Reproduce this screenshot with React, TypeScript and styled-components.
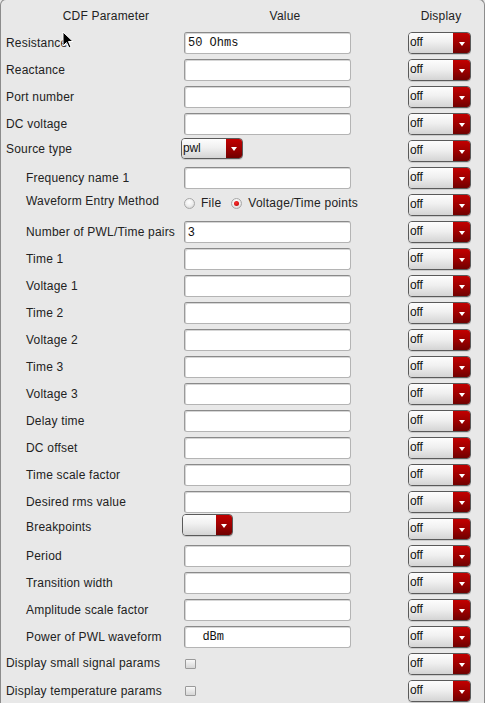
import React from "react";
import styled, { createGlobalStyle } from "styled-components";

const Global = createGlobalStyle`
  html, body { margin: 0; padding: 0; background: #e8e8e8; }
  body { font-family: "Liberation Sans", Arial, sans-serif; font-size: 12px; color: #222; overflow: hidden; }
`;

const Panel = styled.div`
  position: relative;
  width: 485px;
  height: 712px;
  box-sizing: border-box;
  margin-top: -1px;
  border: 1px solid #8c8c8c;
  border-bottom: none;
  border-radius: 6px 6px 0 0;
  background: #e8e8e8;
`;

const Header = styled.div`
  display: grid;
  grid-template-columns: 200px 202px 66px;
  height: 30px;
  align-items: center;
  padding-left: 5px;
  box-sizing: border-box;
  padding-top: 1px;
`;

const HeadCell = styled.div<{ $pad?: number }>`
  text-align: center;
  padding-right: ${(p) => p.$pad ?? 0}px;
  color: #222;
  letter-spacing: 0.2px;
`;

const Row = styled.div`
  display: flex;
  align-items: flex-start;
  height: 27px;
  padding-top: 2px;
  padding-left: 5px;
  box-sizing: border-box;
`;

const Label = styled.div<{ $indent?: boolean; $lift?: number }>`
  width: 178px;
  flex: none;
  box-sizing: border-box;
  padding-left: ${(p) => (p.$indent ? 20 : 0)}px;
  line-height: 22px;
  height: 22px;
  margin-top: ${(p) => -(p.$lift ?? 0)}px;
  white-space: nowrap;
  letter-spacing: 0.2px;
  color: #222;
`;

const ValueCell = styled.div<{ $lift?: number }>`
  width: 224px;
  flex: none;
  display: flex;
  align-items: center;
  height: 22px;
  margin-top: ${(p) => -(p.$lift ?? 0)}px;
`;

const DisplayCell = styled.div`
  width: 63px;
  flex: none;
`;

const TextField = styled.div<{ $mono?: boolean }>`
  width: 167px;
  height: 22px;
  box-sizing: border-box;
  background: #fff;
  border: 1px solid #b4b4b4;
  border-top-color: #8a8a8a;
  border-left-color: #9a9a9a;
  border-radius: 3px;
  box-shadow: inset 1px 1px 0 #d6d6d6;
  padding-left: 3px;
  line-height: 20px;
  white-space: pre;
  font-family: ${(p) =>
    p.$mono ? `"Liberation Mono", "DejaVu Sans Mono", monospace` : `"Liberation Sans", Arial, sans-serif`};
  font-size: 12px;
  color: #111;
`;

const Combo = styled.div<{ $w: number; $h?: number; $x?: number }>`
  display: flex;
  flex: none;
  width: ${(p) => p.$w}px;
  height: ${(p) => p.$h ?? 22}px;
  margin-left: ${(p) => p.$x ?? 0}px;
  box-sizing: border-box;
  border: 1px solid #5a5a5a;
  border-radius: 4px;
  overflow: hidden;
  box-shadow: 0 1px 0 rgba(0, 0, 0, 0.12);
`;

const ComboText = styled.div`
  flex: 1;
  background: linear-gradient(#fdfdfd 0%, #f0f0f0 45%, #d4d4d4 100%);
  padding-left: 1px;
  line-height: 19px;
  color: #111;
  font-size: 12px;
  letter-spacing: -0.2px;
`;

const ComboArrow = styled.div<{ $w: number }>`
  width: ${(p) => p.$w}px;
  flex: none;
  background: linear-gradient(#c20000 0%, #9a0000 55%, #700000 100%);
  display: flex;
  align-items: center;
  justify-content: center;
  &::after {
    content: "";
    width: 0;
    height: 0;
    border-left: 3.5px solid transparent;
    border-right: 3.5px solid transparent;
    border-top: 4px solid #fff;
    margin-top: 1px;
  }
`;

const RadioGroup = styled.div`
  display: flex;
  align-items: center;
  gap: 6px;
`;

const RadioItem = styled.label`
  display: flex;
  align-items: center;
  gap: 6px;
  margin-right: 4px;
  letter-spacing: 0.25px;
  color: #222;
`;

const RadioDot = styled.span<{ $on?: boolean }>`
  width: 11px;
  height: 11px;
  border-radius: 50%;
  box-sizing: border-box;
  border: 1px solid #a8a8a8;
  background: radial-gradient(circle at 45% 35%, #ffffff 0%, #eeeeee 50%, #c8c8c8 100%);
  display: flex;
  align-items: center;
  justify-content: center;
  &::after {
    content: "";
    display: ${(p) => (p.$on ? "block" : "none")};
    width: 5px;
    height: 5px;
    border-radius: 50%;
    background: radial-gradient(circle at 40% 35%, #ff3030, #b00000);
  }
`;

const Check = styled.span`
  display: block;
  width: 11px;
  height: 10px;
  margin-left: 1px;
  box-sizing: border-box;
  border: 1px solid #9a9a9a;
  border-radius: 1px;
  background: linear-gradient(#f8f8f8, #d6d6d6);
`;

const Cursor = styled.svg`
  position: absolute;
  left: 61px;
  top: 31px;
`;

type Kind =
  | { t: "field"; v?: string; mono?: boolean }
  | { t: "combo"; v: string; w: number; arrow: number; lift: number; x: number; h?: number }
  | { t: "radio" }
  | { t: "check" };

type R = { label: string; indent?: boolean; lift?: number; kind: Kind };

const rows: R[] = [
  { label: "Resistance", kind: { t: "field", v: "50 Ohms", mono: true } },
  { label: "Reactance", kind: { t: "field" } },
  { label: "Port number", kind: { t: "field" } },
  { label: "DC voltage", kind: { t: "field" } },
  { label: "Source type", lift: 2, kind: { t: "combo", v: "pwl", w: 62, arrow: 16, lift: 3, x: -3, h: 21 } },
  { label: "Frequency name 1", indent: true, kind: { t: "field" } },
  { label: "Waveform Entry Method", indent: true, lift: 4, kind: { t: "radio" } },
  { label: "Number of PWL/Time pairs", indent: true, kind: { t: "field", v: "3" } },
  { label: "Time 1", indent: true, kind: { t: "field" } },
  { label: "Voltage 1", indent: true, kind: { t: "field" } },
  { label: "Time 2", indent: true, kind: { t: "field" } },
  { label: "Voltage 2", indent: true, kind: { t: "field" } },
  { label: "Time 3", indent: true, kind: { t: "field" } },
  { label: "Voltage 3", indent: true, kind: { t: "field" } },
  { label: "Delay time", indent: true, kind: { t: "field" } },
  { label: "DC offset", indent: true, kind: { t: "field" } },
  { label: "Time scale factor", indent: true, kind: { t: "field" } },
  { label: "Desired rms value", indent: true, kind: { t: "field" } },
  { label: "Breakpoints", indent: true, lift: 2, kind: { t: "combo", v: "", w: 51, arrow: 16, lift: 4, x: -2 } },
  { label: "Period", indent: true, kind: { t: "field" } },
  { label: "Transition width", indent: true, kind: { t: "field" } },
  { label: "Amplitude scale factor", indent: true, kind: { t: "field" } },
  { label: "Power of PWL waveform", indent: true, kind: { t: "field", v: "  dBm", mono: true } },
  { label: "Display small signal params", lift: 1, kind: { t: "check" } },
  { label: "Display temperature params", kind: { t: "check" } },
];

function Value({ kind }: { kind: Kind }) {
  switch (kind.t) {
    case "field":
      return (
        <ValueCell>
          <TextField $mono={kind.mono}>{kind.v ?? ""}</TextField>
        </ValueCell>
      );
    case "combo":
      return (
        <ValueCell $lift={kind.lift}>
          <Combo $w={kind.w} $h={kind.h} $x={kind.x}>
            <ComboText>{kind.v}</ComboText>
            <ComboArrow $w={kind.arrow} />
          </Combo>
        </ValueCell>
      );
    case "radio":
      return (
        <ValueCell $lift={2}>
          <RadioGroup>
            <RadioItem>
              <RadioDot />
              File
            </RadioItem>
            <RadioItem>
              <RadioDot $on />
              Voltage/Time points
            </RadioItem>
          </RadioGroup>
        </ValueCell>
      );
    case "check":
      return (
        <ValueCell>
          <Check />
        </ValueCell>
      );
  }
}

export default function App() {
  return (
    <>
      <Global />
      <Panel>
        <Header>
          <HeadCell>CDF Parameter</HeadCell>
          <HeadCell $pad={44}>Value</HeadCell>
          <HeadCell>Display</HeadCell>
        </Header>
        {rows.map((r) => (
          <Row key={r.label}>
            <Label $indent={r.indent} $lift={r.lift}>
              {r.label}
            </Label>
            <Value kind={r.kind} />
            <DisplayCell>
              <Combo $w={63}>
                <ComboText>off</ComboText>
                <ComboArrow $w={17} />
              </Combo>
            </DisplayCell>
          </Row>
        ))}
        <Cursor width="13" height="19" viewBox="0 0 13 19">
          <path d="M1 1 L1 15 L4.5 11.5 L7 17 L9 16 L6.5 10.5 L11 10.5 Z" fill="#000" stroke="#fff" strokeWidth="1" />
        </Cursor>
      </Panel>
    </>
  );
}
